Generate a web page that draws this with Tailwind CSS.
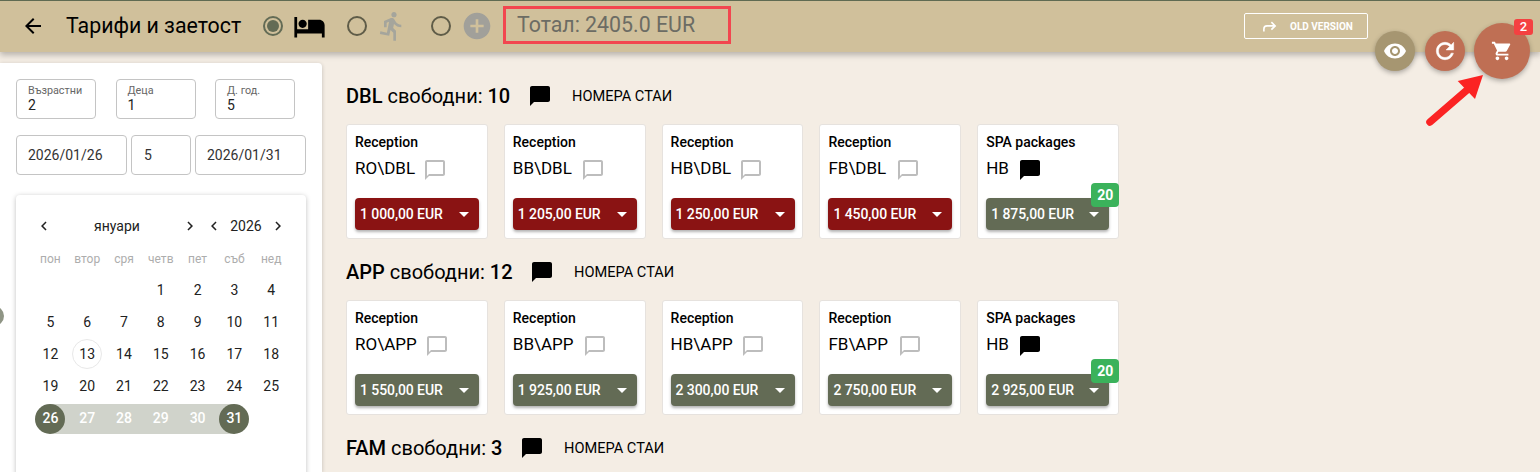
<!DOCTYPE html>
<html lang="bg">
<head>
<meta charset="utf-8">
<script src="https://cdn.jsdelivr.net/npm/@tailwindcss/browser@4"></script>
</head>
<body class="relative h-[472px] w-[1540px] overflow-hidden bg-[#f4ede4] font-['Roboto',sans-serif] text-black">

<header class="relative z-10 flex h-[52px] items-center border-t border-[#5f6b52] bg-[#d0c09b] pb-px pl-[21px] shadow-[0_3px_6px_rgba(0,0,0,0.25)]">
  <svg class="size-6" viewBox="0 0 24 24" fill="currentColor"><path d="M20 11H7.83l5.59-5.59L12 4l-8 8 8 8 1.41-1.41L7.83 13H20v-2z"/></svg>
  <h1 class="ml-[21px] w-[175px] whitespace-nowrap text-[21.33px] leading-6">Тарифи и заетост</h1>
  <span class="ml-[22px] flex size-5 items-center justify-center rounded-full border-2 border-[#636b55]"><span class="size-3 rounded-full bg-[#636b55]"></span></span>
  <svg class="ml-[10px] size-[33px]" viewBox="0 0 24 24" fill="currentColor"><path d="M7 13c1.66 0 3-1.34 3-3S8.66 7 7 7s-3 1.34-3 3 1.34 3 3 3zm12-6h-8v7H3V5H1v15h2v-3h18v3h2v-9c0-2.21-1.79-4-4-4z"/></svg>
  <span class="ml-[21px] size-5 rounded-full border-2 border-[#5f5c48]"></span>
  <svg class="ml-[9px] size-8 text-[#a5a59c]" viewBox="0 0 24 24" fill="currentColor"><path d="M13.49 5.48c1.1 0 2-.9 2-2s-.9-2-2-2-2 .9-2 2 .9 2 2 2zm-3.6 13.9l1-4.4 2.1 2v6h2v-7.5l-2.1-2 .6-3c1.3 1.5 3.3 2.5 5.5 2.5v-2c-1.9 0-3.5-1-4.3-2.4l-1-1.6c-.4-.6-1-1-1.7-1-.3 0-.5.1-.8.1l-5.2 2.2v4.7h2v-3.4l1.8-.7-1.6 8.1-4.9-1-.4 2 7 1.4z"/></svg>
  <span class="ml-[23px] size-5 rounded-full border-2 border-[#5f5c48]"></span>
  <svg class="ml-[10px] size-8 text-[#a1a09a]" viewBox="0 0 24 24" fill="currentColor"><path d="M12 2C6.48 2 2 6.48 2 12s4.48 10 10 10 10-4.48 10-10S17.52 2 12 2zm5 11h-4v4h-2v-4H7v-2h4V7h2v4h4v2z"/></svg>
  <div class="-mt-[2px] ml-[10px] flex h-[38px] w-[228px] items-center border-[3px] border-[#f2464f] pl-[11px] text-[21.33px] whitespace-nowrap text-[#6c6c64]">Тотал: 2405.0 EUR</div>
  <div class="ml-auto mr-[172px] flex h-[26px] w-[124px] items-center rounded-[2px] border border-white pl-[17px] text-[10px] font-bold text-white">
    <svg class="size-[15px]" viewBox="0 0 24 24" fill="none" stroke="currentColor" stroke-width="2.6"><path d="M3 20v-4q0-5 5-5h13"/><path d="M15 5l6 6-6 6"/></svg>
    <span class="ml-[13px] whitespace-nowrap">OLD VERSION</span>
  </div>
</header>

<!-- floating action buttons -->
<div class="absolute left-[1375px] top-[31px] z-20 flex size-10 items-center justify-center rounded-full bg-[#a69671] text-white shadow-[0_2px_5px_rgba(0,0,0,0.3)]">
  <svg class="size-6" viewBox="0 0 24 24" fill="currentColor"><path d="M12 4.5C7 4.5 2.73 7.61 1 12c1.73 4.39 6 7.5 11 7.5s9.27-3.11 11-7.5c-1.73-4.39-6-7.5-11-7.5zM12 17c-2.76 0-5-2.24-5-5s2.24-5 5-5 5 2.24 5 5-2.24 5-5 5zm0-8c-1.66 0-3 1.34-3 3s1.34 3 3 3 3-1.34 3-3-1.34-3-3-3z"/></svg>
</div>
<div class="absolute left-[1425px] top-[31px] z-20 flex size-10 items-center justify-center rounded-full bg-[#bf6f54] text-white shadow-[0_2px_5px_rgba(0,0,0,0.3)]">
  <svg class="size-[26px]" viewBox="0 0 24 24" fill="currentColor" stroke="currentColor" stroke-width="0.5"><path d="M17.65 6.35C16.2 4.9 14.21 4 12 4c-4.42 0-7.99 3.58-7.99 8s3.57 8 7.99 8c3.73 0 6.84-2.55 7.73-6h-2.08c-.82 2.33-3.04 4-5.65 4-3.31 0-6-2.69-6-6s2.69-6 6-6c1.66 0 3.14.69 4.22 1.78L13 11h7V4l-2.35 2.35z"/></svg>
</div>
<div class="absolute left-[1474px] top-[23px] z-20 flex size-14 items-center justify-center rounded-full bg-[#bf6f54] text-white shadow-[0_2px_5px_rgba(0,0,0,0.3)]">
  <svg class="size-[22px]" viewBox="0 0 24 24" fill="currentColor"><path d="M7 18c-1.1 0-1.99.9-1.99 2S5.9 22 7 22s2-.9 2-2-.9-2-2-2zM1 2v2h2l3.6 7.59-1.35 2.45c-.16.28-.25.61-.25.96 0 1.1.9 2 2 2h12v-2H7.42c-.14 0-.25-.11-.25-.25l.03-.12.9-1.83h7.45c.75 0 1.41-.41 1.75-1.03l3.58-6.49c.08-.14.12-.31.12-.48 0-.55-.45-1-1-1H5.21l-.94-2H1zm16 16c-1.1 0-1.99.9-1.99 2s.89 2 1.99 2 2-.9 2-2-.9-2-2-2z"/></svg>
</div>
<div class="absolute left-[1514px] top-[19px] z-20 flex h-[16px] w-[19px] items-center justify-center rounded-[3px] bg-[#f44141] text-[13px] font-medium text-white">2</div>
<svg class="absolute left-[1420px] top-[70px] z-20 h-[60px] w-[66px]" viewBox="0 0 66 60"><path d="M10 52L47 20" stroke="#fb2323" stroke-width="7.5" stroke-linecap="round"/><path d="M63 5L37.7 11L55 29Z" fill="#fb2323"/></svg>

<!-- partial handle on the left edge -->
<div class="absolute left-[-16px] top-[306px] z-20 size-5 rounded-full bg-[#8f9585]"></div>

<main class="flex">
  <aside class="mt-[11px] h-[409px] w-[322px] shrink-0 rounded-tr-[4px] bg-white pl-4 pt-4 shadow-[0_1px_4px_rgba(0,0,0,0.2)]">
    <div class="flex gap-[19.5px]">
      <div class="h-10 w-20 rounded-[4px] border border-[#c4c4c4] pl-[11px] pt-[5px]"><div class="text-[10.8px] leading-3 text-[#666]">Възрастни</div><div class="text-[14px] leading-4 text-[#222]">2</div></div>
      <div class="h-10 w-20 rounded-[4px] border border-[#c4c4c4] pl-[11px] pt-[5px]"><div class="text-[10.8px] leading-3 text-[#666]">Деца</div><div class="text-[14px] leading-4 text-[#222]">1</div></div>
      <div class="h-10 w-20 rounded-[4px] border border-[#c4c4c4] pl-[11px] pt-[5px]"><div class="text-[10.8px] leading-3 text-[#666]">Д. год.</div><div class="text-[14px] leading-4 text-[#222]">5</div></div>
    </div>
    <div class="mt-4 flex gap-1 text-[14px] text-[#333]">
      <div class="flex h-10 w-[111px] items-center rounded-[4px] border border-[#c4c4c4] pl-[11px]">2026/01/26</div>
      <div class="flex h-10 w-[60px] items-center rounded-[4px] border border-[#c4c4c4] pl-[12px]">5</div>
      <div class="flex h-10 w-[111px] items-center rounded-[4px] border border-[#c4c4c4] pl-[11px]">2026/01/31</div>
    </div>
    <section class="mt-5 h-[300px] w-[290px] rounded-[4px] bg-white px-4 pt-4 shadow-[0_1px_5px_rgba(0,0,0,0.25)]">
      <div class="flex h-[30px] items-center text-[14px] text-[#222]">
        <svg class="ml-[3px] size-[18px] shrink-0" viewBox="0 0 24 24" fill="currentColor"><path d="M15.41 7.41L14 6l-6 6 6 6 1.41-1.41L10.83 12z"/></svg>
        <span class="w-[128px] text-center">януари</span>
        <svg class="size-[18px] shrink-0" viewBox="0 0 24 24" fill="currentColor"><path d="M8.59 16.59L10 18l6-6-6-6-1.41 1.41L13.17 12z"/></svg>
        <svg class="ml-[6px] size-[18px] shrink-0" viewBox="0 0 24 24" fill="currentColor"><path d="M15.41 7.41L14 6l-6 6 6 6 1.41-1.41L10.83 12z"/></svg>
        <span class="w-[46px] text-center">2026</span>
        <svg class="size-[18px] shrink-0" viewBox="0 0 24 24" fill="currentColor"><path d="M8.59 16.59L10 18l6-6-6-6-1.41 1.41L13.17 12z"/></svg>
      </div>
      <div class="mt-[6px] grid h-6 grid-cols-[repeat(7,36.8px)] items-center text-center text-[12px] text-[#adadad]">
        <span>пон</span><span>втор</span><span>сря</span><span>четв</span><span>пет</span><span>съб</span><span>нед</span>
      </div>
      <div class="mt-[3px] grid grid-cols-[repeat(7,36.8px)] grid-rows-[repeat(5,32px)] items-center text-center text-[14px] text-[#222]">
        <span></span><span></span><span></span><span>1</span><span>2</span><span>3</span><span>4</span>
        <span>5</span><span>6</span><span>7</span><span>8</span><span>9</span><span>10</span><span>11</span>
        <span>12</span><span class="flex justify-center"><span class="flex size-[30px] items-center justify-center rounded-full border border-[#e8e8e8]">13</span></span><span>14</span><span>15</span><span>16</span><span>17</span><span>18</span>
        <span>19</span><span>20</span><span>21</span><span>22</span><span>23</span><span>24</span><span>25</span>
        <span class="flex h-[30px] justify-center self-end bg-[linear-gradient(to_right,transparent_50%,#d0d3cb_50%)] font-medium text-white"><span class="flex size-[30px] items-center justify-center rounded-full bg-[#636b55] pb-[2px]">26</span></span>
        <span class="flex h-[30px] items-center justify-center self-end bg-[#d0d3cb] pb-[2px] font-medium text-white">27</span>
        <span class="flex h-[30px] items-center justify-center self-end bg-[#d0d3cb] pb-[2px] font-medium text-white">28</span>
        <span class="flex h-[30px] items-center justify-center self-end bg-[#d0d3cb] pb-[2px] font-medium text-white">29</span>
        <span class="flex h-[30px] items-center justify-center self-end bg-[#d0d3cb] pb-[2px] font-medium text-white">30</span>
        <span class="flex h-[30px] justify-center self-end bg-[linear-gradient(to_left,transparent_50%,#d0d3cb_50%)] font-medium text-white"><span class="flex size-[30px] items-center justify-center rounded-full bg-[#636b55] pb-[2px]">31</span></span>
        <span></span>
      </div>
    </section>
  </aside>

  <div class="pl-6 pt-6">
    <!-- DBL -->
    <section class="mb-[13px]">
      <div class="mb-2 flex h-10 items-center text-[20px]">
        <span class="w-[166px] whitespace-nowrap"><b class="font-medium">DBL</b> свободни: <b class="font-medium">10</b></span>
        <svg class="ml-[16px] size-6" viewBox="0 0 24 24" fill="currentColor"><path d="M20 2H4c-1.1 0-2 .9-2 2v18l4-4h14c1.1 0 2-.9 2-2V4c0-1.1-.9-2-2-2z"/></svg>
        <span class="ml-[20px] mt-[2px] whitespace-nowrap text-[14.6px]">НОМЕРА СТАИ</span>
      </div>
      <div class="flex gap-4">
        <article class="h-[115px] w-[141.8px] rounded-[3px] border border-[#e6e2de] bg-white pl-2 pr-2 pt-[7px]">
          <div class="text-[14px] font-medium leading-5">Reception</div>
          <div class="mt-1 flex h-6 items-center text-[17px]"><span class="mt-[2px] w-[58px] whitespace-nowrap">RO\DBL</span><svg class="ml-[10px] mt-1 size-6 text-[#bdbdbd]" viewBox="0 0 24 24" fill="currentColor"><path d="M20 2H4c-1.1 0-2 .9-2 2v18l4-4h14c1.1 0 2-.9 2-2V4c0-1.1-.9-2-2-2zm0 14H6l-2 2V4h16v12z"/></svg></div>
          <div class="mt-[18px] flex h-8 w-[124px] items-center justify-between rounded-[4px] bg-[#8a1313] pl-[5px] pr-[10px] text-[14px] font-medium tracking-[-0.08px] text-white shadow-[0_2px_3px_rgba(0,0,0,0.3)]">1 000,00 EUR<span class="size-0 border-x-[5px] border-t-[5px] border-x-transparent border-t-white"></span></div>
        </article>
        <article class="h-[115px] w-[141.8px] rounded-[3px] border border-[#e6e2de] bg-white pl-2 pr-2 pt-[7px]">
          <div class="text-[14px] font-medium leading-5">Reception</div>
          <div class="mt-1 flex h-6 items-center text-[17px]"><span class="mt-[2px] w-[58px] whitespace-nowrap">BB\DBL</span><svg class="ml-[10px] mt-1 size-6 text-[#bdbdbd]" viewBox="0 0 24 24" fill="currentColor"><path d="M20 2H4c-1.1 0-2 .9-2 2v18l4-4h14c1.1 0 2-.9 2-2V4c0-1.1-.9-2-2-2zm0 14H6l-2 2V4h16v12z"/></svg></div>
          <div class="mt-[18px] flex h-8 w-[124px] items-center justify-between rounded-[4px] bg-[#8a1313] pl-[5px] pr-[10px] text-[14px] font-medium tracking-[-0.08px] text-white shadow-[0_2px_3px_rgba(0,0,0,0.3)]">1 205,00 EUR<span class="size-0 border-x-[5px] border-t-[5px] border-x-transparent border-t-white"></span></div>
        </article>
        <article class="h-[115px] w-[141.8px] rounded-[3px] border border-[#e6e2de] bg-white pl-2 pr-2 pt-[7px]">
          <div class="text-[14px] font-medium leading-5">Reception</div>
          <div class="mt-1 flex h-6 items-center text-[17px]"><span class="mt-[2px] w-[58px] whitespace-nowrap">HB\DBL</span><svg class="ml-[10px] mt-1 size-6 text-[#bdbdbd]" viewBox="0 0 24 24" fill="currentColor"><path d="M20 2H4c-1.1 0-2 .9-2 2v18l4-4h14c1.1 0 2-.9 2-2V4c0-1.1-.9-2-2-2zm0 14H6l-2 2V4h16v12z"/></svg></div>
          <div class="mt-[18px] flex h-8 w-[124px] items-center justify-between rounded-[4px] bg-[#8a1313] pl-[5px] pr-[10px] text-[14px] font-medium tracking-[-0.08px] text-white shadow-[0_2px_3px_rgba(0,0,0,0.3)]">1 250,00 EUR<span class="size-0 border-x-[5px] border-t-[5px] border-x-transparent border-t-white"></span></div>
        </article>
        <article class="h-[115px] w-[141.8px] rounded-[3px] border border-[#e6e2de] bg-white pl-2 pr-2 pt-[7px]">
          <div class="text-[14px] font-medium leading-5">Reception</div>
          <div class="mt-1 flex h-6 items-center text-[17px]"><span class="mt-[2px] w-[58px] whitespace-nowrap">FB\DBL</span><svg class="ml-[10px] mt-1 size-6 text-[#bdbdbd]" viewBox="0 0 24 24" fill="currentColor"><path d="M20 2H4c-1.1 0-2 .9-2 2v18l4-4h14c1.1 0 2-.9 2-2V4c0-1.1-.9-2-2-2zm0 14H6l-2 2V4h16v12z"/></svg></div>
          <div class="mt-[18px] flex h-8 w-[124px] items-center justify-between rounded-[4px] bg-[#8a1313] pl-[5px] pr-[10px] text-[14px] font-medium tracking-[-0.08px] text-white shadow-[0_2px_3px_rgba(0,0,0,0.3)]">1 450,00 EUR<span class="size-0 border-x-[5px] border-t-[5px] border-x-transparent border-t-white"></span></div>
        </article>
        <article class="h-[115px] w-[141.8px] rounded-[3px] border border-[#e6e2de] bg-white pl-2 pr-2 pt-[7px]">
          <div class="text-[14px] font-medium leading-5">SPA packages</div>
          <div class="mt-1 flex h-6 items-center text-[17px]"><span class="mt-[2px] whitespace-nowrap">HB</span><svg class="ml-[9px] mt-1 size-6" viewBox="0 0 24 24" fill="currentColor"><path d="M20 2H4c-1.1 0-2 .9-2 2v18l4-4h14c1.1 0 2-.9 2-2V4c0-1.1-.9-2-2-2z"/></svg></div>
          <div class="relative mt-[18px] flex h-8 w-[123px] items-center justify-between rounded-[4px] bg-[#636b55] pl-[5px] pr-[10px] text-[14px] font-medium tracking-[-0.08px] text-white shadow-[0_2px_3px_rgba(0,0,0,0.3)]">1 875,00 EUR<span class="size-0 border-x-[5px] border-t-[5px] border-x-transparent border-t-white"></span><span class="absolute left-[105px] top-[-15px] flex h-6 w-7 items-center justify-center rounded-[4px] bg-[#3bb25b] font-bold">20</span></div>
        </article>
      </div>
    </section>
    <!-- APP -->
    <section class="mb-[13px]">
      <div class="mb-2 flex h-10 items-center text-[20px]">
        <span class="w-[168px] whitespace-nowrap"><b class="font-medium">APP</b> свободни: <b class="font-medium">12</b></span>
        <svg class="ml-[16px] size-6" viewBox="0 0 24 24" fill="currentColor"><path d="M20 2H4c-1.1 0-2 .9-2 2v18l4-4h14c1.1 0 2-.9 2-2V4c0-1.1-.9-2-2-2z"/></svg>
        <span class="ml-[20px] mt-[2px] whitespace-nowrap text-[14.6px]">НОМЕРА СТАИ</span>
      </div>
      <div class="flex gap-4">
        <article class="h-[115px] w-[141.8px] rounded-[3px] border border-[#e6e2de] bg-white pl-2 pr-2 pt-[7px]">
          <div class="text-[14px] font-medium leading-5">Reception</div>
          <div class="mt-1 flex h-6 items-center text-[17px]"><span class="mt-[2px] w-[60px] whitespace-nowrap">RO\APP</span><svg class="ml-[10px] mt-1 size-6 text-[#bdbdbd]" viewBox="0 0 24 24" fill="currentColor"><path d="M20 2H4c-1.1 0-2 .9-2 2v18l4-4h14c1.1 0 2-.9 2-2V4c0-1.1-.9-2-2-2zm0 14H6l-2 2V4h16v12z"/></svg></div>
          <div class="mt-[18px] flex h-8 w-[124px] items-center justify-between rounded-[4px] bg-[#636b55] pl-[5px] pr-[10px] text-[14px] font-medium tracking-[-0.08px] text-white shadow-[0_2px_3px_rgba(0,0,0,0.3)]">1 550,00 EUR<span class="size-0 border-x-[5px] border-t-[5px] border-x-transparent border-t-white"></span></div>
        </article>
        <article class="h-[115px] w-[141.8px] rounded-[3px] border border-[#e6e2de] bg-white pl-2 pr-2 pt-[7px]">
          <div class="text-[14px] font-medium leading-5">Reception</div>
          <div class="mt-1 flex h-6 items-center text-[17px]"><span class="mt-[2px] w-[60px] whitespace-nowrap">BB\APP</span><svg class="ml-[10px] mt-1 size-6 text-[#bdbdbd]" viewBox="0 0 24 24" fill="currentColor"><path d="M20 2H4c-1.1 0-2 .9-2 2v18l4-4h14c1.1 0 2-.9 2-2V4c0-1.1-.9-2-2-2zm0 14H6l-2 2V4h16v12z"/></svg></div>
          <div class="mt-[18px] flex h-8 w-[124px] items-center justify-between rounded-[4px] bg-[#636b55] pl-[5px] pr-[10px] text-[14px] font-medium tracking-[-0.08px] text-white shadow-[0_2px_3px_rgba(0,0,0,0.3)]">1 925,00 EUR<span class="size-0 border-x-[5px] border-t-[5px] border-x-transparent border-t-white"></span></div>
        </article>
        <article class="h-[115px] w-[141.8px] rounded-[3px] border border-[#e6e2de] bg-white pl-2 pr-2 pt-[7px]">
          <div class="text-[14px] font-medium leading-5">Reception</div>
          <div class="mt-1 flex h-6 items-center text-[17px]"><span class="mt-[2px] w-[60px] whitespace-nowrap">HB\APP</span><svg class="ml-[10px] mt-1 size-6 text-[#bdbdbd]" viewBox="0 0 24 24" fill="currentColor"><path d="M20 2H4c-1.1 0-2 .9-2 2v18l4-4h14c1.1 0 2-.9 2-2V4c0-1.1-.9-2-2-2zm0 14H6l-2 2V4h16v12z"/></svg></div>
          <div class="mt-[18px] flex h-8 w-[124px] items-center justify-between rounded-[4px] bg-[#636b55] pl-[5px] pr-[10px] text-[14px] font-medium tracking-[-0.08px] text-white shadow-[0_2px_3px_rgba(0,0,0,0.3)]">2 300,00 EUR<span class="size-0 border-x-[5px] border-t-[5px] border-x-transparent border-t-white"></span></div>
        </article>
        <article class="h-[115px] w-[141.8px] rounded-[3px] border border-[#e6e2de] bg-white pl-2 pr-2 pt-[7px]">
          <div class="text-[14px] font-medium leading-5">Reception</div>
          <div class="mt-1 flex h-6 items-center text-[17px]"><span class="mt-[2px] w-[60px] whitespace-nowrap">FB\APP</span><svg class="ml-[10px] mt-1 size-6 text-[#bdbdbd]" viewBox="0 0 24 24" fill="currentColor"><path d="M20 2H4c-1.1 0-2 .9-2 2v18l4-4h14c1.1 0 2-.9 2-2V4c0-1.1-.9-2-2-2zm0 14H6l-2 2V4h16v12z"/></svg></div>
          <div class="mt-[18px] flex h-8 w-[124px] items-center justify-between rounded-[4px] bg-[#636b55] pl-[5px] pr-[10px] text-[14px] font-medium tracking-[-0.08px] text-white shadow-[0_2px_3px_rgba(0,0,0,0.3)]">2 750,00 EUR<span class="size-0 border-x-[5px] border-t-[5px] border-x-transparent border-t-white"></span></div>
        </article>
        <article class="h-[115px] w-[141.8px] rounded-[3px] border border-[#e6e2de] bg-white pl-2 pr-2 pt-[7px]">
          <div class="text-[14px] font-medium leading-5">SPA packages</div>
          <div class="mt-1 flex h-6 items-center text-[17px]"><span class="mt-[2px] whitespace-nowrap">HB</span><svg class="ml-[9px] mt-1 size-6" viewBox="0 0 24 24" fill="currentColor"><path d="M20 2H4c-1.1 0-2 .9-2 2v18l4-4h14c1.1 0 2-.9 2-2V4c0-1.1-.9-2-2-2z"/></svg></div>
          <div class="relative mt-[18px] flex h-8 w-[123px] items-center justify-between rounded-[4px] bg-[#636b55] pl-[5px] pr-[10px] text-[14px] font-medium tracking-[-0.08px] text-white shadow-[0_2px_3px_rgba(0,0,0,0.3)]">2 925,00 EUR<span class="size-0 border-x-[5px] border-t-[5px] border-x-transparent border-t-white"></span><span class="absolute left-[105px] top-[-15px] flex h-6 w-7 items-center justify-center rounded-[4px] bg-[#3bb25b] font-bold">20</span></div>
        </article>
      </div>
    </section>
    <!-- FAM -->
    <section>
      <div class="flex h-10 items-center text-[20px]">
        <span class="w-[158px] whitespace-nowrap"><b class="font-medium">FAM</b> свободни: <b class="font-medium">3</b></span>
        <svg class="ml-[16px] size-6" viewBox="0 0 24 24" fill="currentColor"><path d="M20 2H4c-1.1 0-2 .9-2 2v18l4-4h14c1.1 0 2-.9 2-2V4c0-1.1-.9-2-2-2z"/></svg>
        <span class="ml-[20px] mt-[2px] whitespace-nowrap text-[14.6px]">НОМЕРА СТАИ</span>
      </div>
    </section>
  </div>
</main>
</body>
</html>
